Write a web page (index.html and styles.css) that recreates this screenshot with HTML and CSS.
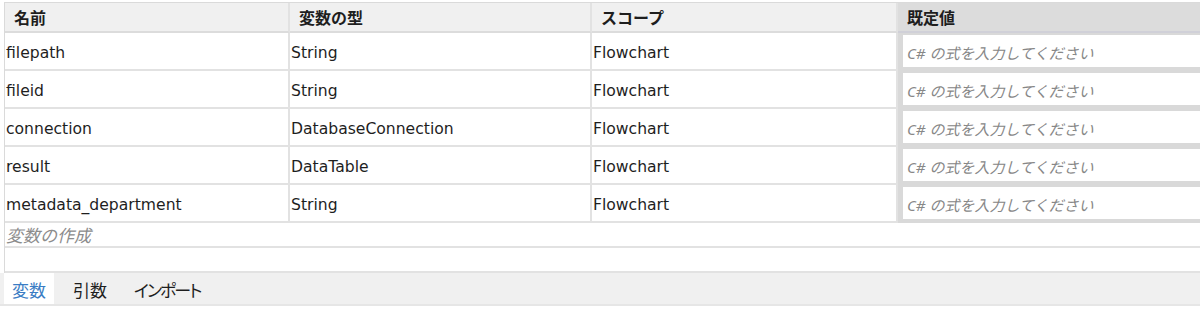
FILE: index.html
```html
<!DOCTYPE html>
<html lang="ja">
<head>
<meta charset="utf-8">
<link rel="stylesheet" href="styles.css">
</head>
<body>
<div class="panel">
  <div class="table">
    <div class="row head">
      <div class="cell">名前</div>
      <div class="cell">変数の型</div>
      <div class="cell">スコープ</div>
      <div class="cell val">既定値</div>
    </div>
    <div class="row">
      <div class="cell">filepath</div>
      <div class="cell">String</div>
      <div class="cell">Flowchart</div>
      <div class="cell val"><div class="input">C# の式を入力してください</div></div>
    </div>
    <div class="row">
      <div class="cell">fileid</div>
      <div class="cell">String</div>
      <div class="cell">Flowchart</div>
      <div class="cell val"><div class="input">C# の式を入力してください</div></div>
    </div>
    <div class="row">
      <div class="cell">connection</div>
      <div class="cell">DatabaseConnection</div>
      <div class="cell">Flowchart</div>
      <div class="cell val"><div class="input">C# の式を入力してください</div></div>
    </div>
    <div class="row">
      <div class="cell">result</div>
      <div class="cell">DataTable</div>
      <div class="cell">Flowchart</div>
      <div class="cell val"><div class="input">C# の式を入力してください</div></div>
    </div>
    <div class="row">
      <div class="cell">metadata_department</div>
      <div class="cell">String</div>
      <div class="cell">Flowchart</div>
      <div class="cell val"><div class="input">C# の式を入力してください</div></div>
    </div>
    <div class="create">変数の作成</div>
    <div class="empty"></div>
  </div>
  <div class="tabs">
    <div class="tab active">変数</div>
    <div class="tab">引数</div>
    <div class="tab kana">インポート</div>
  </div>
</div>
</body>
</html>
```

FILE: styles.css
```css
* { box-sizing: border-box; }
html, body { margin: 0; padding: 0; background: #ffffff; }
body {
  font-family: "DejaVu Sans", "Noto Sans CJK JP", sans-serif;
  font-size: 15.6px;
  color: #1e1e1e;
  width: 1200px;
  height: 315px;
  overflow: hidden;
}
.panel {
  padding-top: 2px;
  padding-left: 4px;
}
.table {
  border-top: 1px solid #dadada;
  border-left: 1px solid #dadada;
}
.row {
  display: grid;
  grid-template-columns: 285px 302px 306px 1fr;
  height: 38px;
}
.row .cell {
  display: flex;
  align-items: center;
  padding-left: 1px;
  padding-top: 3px;
  border-right: 2px solid #e2e2e2;
  border-bottom: 2px solid #e2e2e2;
  white-space: nowrap;
  overflow: hidden;
}
.row.head { height: 30px; }
.row.head .cell {
  background: #f0f0f0;
  font-family: "Noto Sans CJK JP", sans-serif;
  font-weight: bold;
  font-size: 16px;
  padding-left: 9px;
  padding-top: 0;
  border-bottom: 2px solid #dcdcdc;
}
.row.head .cell.val {
  background: #dcdcdc;
  border-right: none;
  border-bottom: 2px solid #d0d0d8;
}
.row .cell.val {
  background: #d9d9d9;
  border-right: none;
  border-bottom: none;
  padding: 2px 0 4px 5px;
  align-items: stretch;
}
.row.head .cell.val { padding: 0 0 0 9px; align-items: center; }
.input {
  flex: 1;
  background: #ffffff;
  color: #878787;
  font-style: italic;
  font-family: "Noto Sans", "Noto Sans CJK JP", sans-serif;
  font-size: 15px;
  display: flex;
  align-items: center;
  padding-left: 4px;
  padding-top: 3px;
}
.create {
  height: 25px;
  display: flex;
  align-items: center;
  padding-left: 1px;
  color: #8c8c8c;
  font-style: italic;
  font-size: 17px;
  font-family: "Noto Sans CJK JP", sans-serif;
  border-bottom: 2px solid #e2e2e2;
}
.empty {
  height: 25px;
  border-bottom: 2px solid #e2e2e2;
}
.tabs {
  display: flex;
  gap: 11px;
  background: #f0f0f0;
  height: 33px;
  margin-left: -4px;
  padding-left: 4px;
  border-bottom: 2px solid #e6e6e6;
}
.tab {
  display: flex;
  align-items: center;
  padding: 2px 8px 0 8px;
  font-size: 17px;
  font-family: "Noto Sans CJK JP", sans-serif;
  font-feature-settings: "palt";
  color: #1e1e1e;
}
.tab.kana { letter-spacing: -2px; }
.tab.active {
  background: #ffffff;
  color: #3a7cc4;
}
```
